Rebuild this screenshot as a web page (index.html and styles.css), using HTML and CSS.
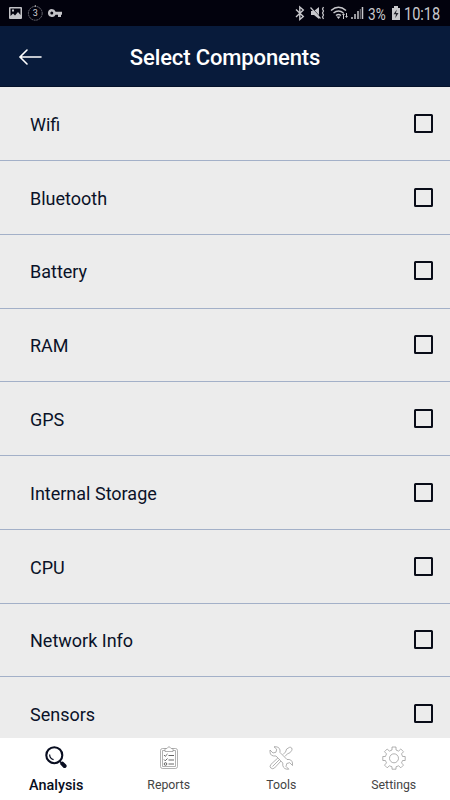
FILE: index.html
```html
<!DOCTYPE html>
<html lang="en">
<head>
<meta charset="utf-8">
<title>Select Components</title>
<link rel="stylesheet" href="styles.css">
</head>
<body>
<div class="status">
  <svg class="status-left" width="70" height="26" viewBox="0 0 70 26">
    <path fill="#c4c4c8" fill-rule="evenodd" d="M10 7h11q1 0 1 1v10q0 1-1 1H10q-1 0-1-1V8q0-1 1-1zM10.500 8.500V16l2.500-2.500 2 2 3-3.500 2.500 3V8.500zM12 9.500h2v2h-2z"/>
    <circle cx="35.300" cy="13.300" r="6.900" fill="none" stroke="#85858d" stroke-width=".8" stroke-dasharray="2 .6"/>
    <path stroke="#aaa" d="M35.300 5v2"/>
    <text class="count" x="35.300" y="16.400">3</text>
    <path fill="#c4c4c8" fill-rule="evenodd" d="M51.800 9a4 4 0 0 1 3.800 2.700H62v3h-1V17h-3v-2.300h-2.400A4 4 0 1 1 51.800 9zm0 2.600a1.500 1.500 0 1 0 0 3 1.500 1.500 0 0 0 0-3z"/>
  </svg>
  <svg class="status-icons" width="74" height="26" viewBox="292 0 74 26">
    <path fill="none" stroke="#c8c8cc" stroke-width="1.400" d="M296 9.500l7.300 7-3.500 3V7l3.500 3-7.300 7"/>
    <path fill="#c8c8cc" d="M311 11h3l5-4v12l-5-4h-3z"/>
    <path stroke="#02020d" stroke-width="1" d="M311 7l11 12"/>
    <path stroke="#c8c8cc" stroke-width="1.200" d="M310.500 7.500l10 11M323.500 7l-1 2 1 2-1 2 1 2-1 2 1 2" fill="none"/>
    <path fill="none" stroke="#c8c8cc" stroke-width="1.500" d="M331 10.500q7.500-6.500 15 0M333.500 13q5-4 10 0M336 15.500q2.500-2 5 0"/>
    <path fill="#c8c8cc" d="M336.500 16.500h4l-2 2.500zM342 15l1.500-2 1.500 2h-1v4h-1v-4zM345 16h1v-3h1v3h1l-1.500 2z"/>
    <path stroke="#c8c8cc" stroke-width="1.500" d="M352 19v-2M355 19v-5M358 19v-8M362.500 19V7"/>
    <path stroke="#77777f" d="M360.300 19V9"/>
  </svg>
  <span class="percent"><span>3%</span></span>
  <svg class="battery" width="10" height="26" viewBox="0 0 10 26">
    <path fill="#c8c8cc" d="M3 6h4v2h2v12H1V8h2z"/>
    <path fill="#25252e" d="M5.800 9.500L2.500 14.300H5l-.8 4 3.300-5.200H5z"/>
  </svg>
  <span class="clock"><span>10:18</span></span>
</div>
<header class="header">
  <svg class="back" width="24" height="18" viewBox="0 0 24 18"><path d="M23 9H2M9 2L2 9l7 7"/></svg>
  <h1 class="title">Select Components</h1>
</header>
<main class="list">
  <label class="row"><span>Wifi</span><i class="box"></i></label>
  <label class="row"><span>Bluetooth</span><i class="box"></i></label>
  <label class="row"><span>Battery</span><i class="box"></i></label>
  <label class="row"><span>RAM</span><i class="box"></i></label>
  <label class="row"><span>GPS</span><i class="box"></i></label>
  <label class="row"><span>Internal Storage</span><i class="box"></i></label>
  <label class="row"><span>CPU</span><i class="box"></i></label>
  <label class="row"><span>Network Info</span><i class="box"></i></label>
  <label class="row"><span>Sensors</span><i class="box"></i></label>
</main>
<nav class="tabs">
  <a class="tab active">
    <svg width="24" height="24" viewBox="0 0 24 24"><circle cx="10.300" cy="9.200" r="8" stroke-width="2.100"/><path stroke-width="1.200" d="M5.600 8.500q.2 4.200 4 5.200"/><path stroke-width="1.500" d="M15.500 15l2 2"/><path stroke-width="4" stroke-linecap="round" d="M18.300 17.700l2.300 2.300"/></svg>
    <span>Analysis</span>
  </a>
  <a class="tab">
    <svg width="24" height="24" viewBox="0 0 24 24"><path d="M8.500 2.500H5.500a2 2 0 0 0-2 2v16a2 2 0 0 0 2 2h13a2 2 0 0 0 2-2v-16a2 2 0 0 0-2-2h-3M8 5.500v-3h2q2-3.500 4 0h2v3zM8 4.500H5.500v16h13v-16H16"/><path class="detail" d="M7 9l1.200 1.300L10.500 8M7 13.500l1.200 1.300 2.300-2.300M11.500 9.500H17M11.500 14H17M11.500 18H17"/><circle class="detail" cx="8.500" cy="18" r="1.300"/></svg>
    <span>Reports</span>
  </a>
  <a class="tab">
    <svg width="24" height="24" viewBox="0 0 24 24"><path d="M1 4l3 3 3-.8.700-3L5 .8q5-.6 6 3.200v2.500l7 7q4.700-.6 5.500 3.500v2.500l-2.800-2.800-2.900.8-.8 2.900 2.800 2.800q-5 .5-6-3.700V17L7 10Q1.200 10.500 1 6z"/><path d="M14 8.500l2.500-2.500q.2-3.500 4-4.700Q22 1 22.700 2q.7 1.200 0 2.500-1.500 3-4.300 3.300L16 10.400M8.800 12l-7 6.500q-1.500 2 0 3.500 2 1.500 3.700 0l6.500-7M3.500 20.500l7-7"/></svg>
    <span>Tools</span>
  </a>
  <a class="tab">
    <svg width="24" height="24" viewBox="0 0 24 24"><path d="M10 1h4v3l2.600 1.100L18.800 3l2.700 2.700-2 2.200L20.600 10.500h2.600v4h-2.600l-1.100 2.400 2 2.200-2.700 2.700-2.200-2-2.600 1v2.400h-4v-2.400l-2.600-1-2.200 2-2.700-2.700 2-2.200-1.100-2.400H.8v-4h2.600l1.100-2.600-2-2.200L5.200 3l2.200 2.100L10 4z"/><circle cx="12" cy="12.300" r="4.500"/></svg>
    <span>Settings</span>
  </a>
</nav>
</body>
</html>
```

FILE: styles.css
```css
* { box-sizing: border-box; }
body {
  margin: 0;
  width: 450px;
  height: 800px;
  overflow: hidden;
  display: flex;
  flex-direction: column;
  font-family: Roboto, "Liberation Sans", sans-serif;
  background: #ececec;
}
.status {
  height: 26px;
  flex: none;
  display: flex;
  align-items: center;
  background: #02020d;
  color: #c8c8cc;
  line-height: 26px;
}
.status svg { flex: none; }
.status-icons { margin-left: 222px; }
.count { font-size: 9px; fill: #d0d0d4; text-anchor: middle; }
.percent { width: 24px; padding-left: 2px; font-size: 17px; padding-top: 2px; }
.percent span, .clock span { display: inline-block; transform: scaleX(.8); transform-origin: 0 50%; }
.battery { margin-left: 1px; }
.clock { margin-left: 3px; font-size: 17.500px; padding-top: 2px; }
.clock span { transform: scaleX(.83); }
.header {
  height: 61px;
  flex: none;
  display: grid;
  grid-template-columns: 50px 1fr 50px;
  align-items: center;
  background: #081b3b;
  border-bottom: 1px solid #05122a;
}
.back { margin-left: 18px; margin-top: 1px; fill: none; stroke: #fff; stroke-width: 1.600; stroke-linecap: round; }
.title { margin: 2px 0 0; font-size: 22px; font-weight: 500; letter-spacing: -.13px; color: #fff; text-align: center; white-space: nowrap; }
.list { flex: 1; min-height: 0; overflow: hidden; padding-top: .3px; }
.row {
  height: 73.780px;
  display: flex;
  align-items: center;
  justify-content: space-between;
  padding: 1.500px 17px 0 30px;
  border-bottom: 1px solid #a3b0c8;
  font-size: 18px;
  color: #0a1228;
}
.box { width: 19px; height: 19px; border: 2px solid #090c18; border-radius: 1.500px; margin-top: -2px; }
.tabs { height: 62px; flex: none; display: grid; grid-template-columns: repeat(4, 1fr); background: #fff; }
.tab { display: flex; flex-direction: column; align-items: center; padding-top: 8px; font-size: 12.300px; color: #444; }
.tab svg { flex: none; fill: none; stroke: #888; stroke-width: .65; }
.tab .detail { stroke: #555; stroke-width: .9; }
.tab span { margin-top: 7px; line-height: 16px; }
.tab.active { font-size: 14.400px; font-weight: 500; color: #080d20; }
.tab.active span { margin-top: 8px; }
.tab.active svg { stroke: #080d20; }
```
